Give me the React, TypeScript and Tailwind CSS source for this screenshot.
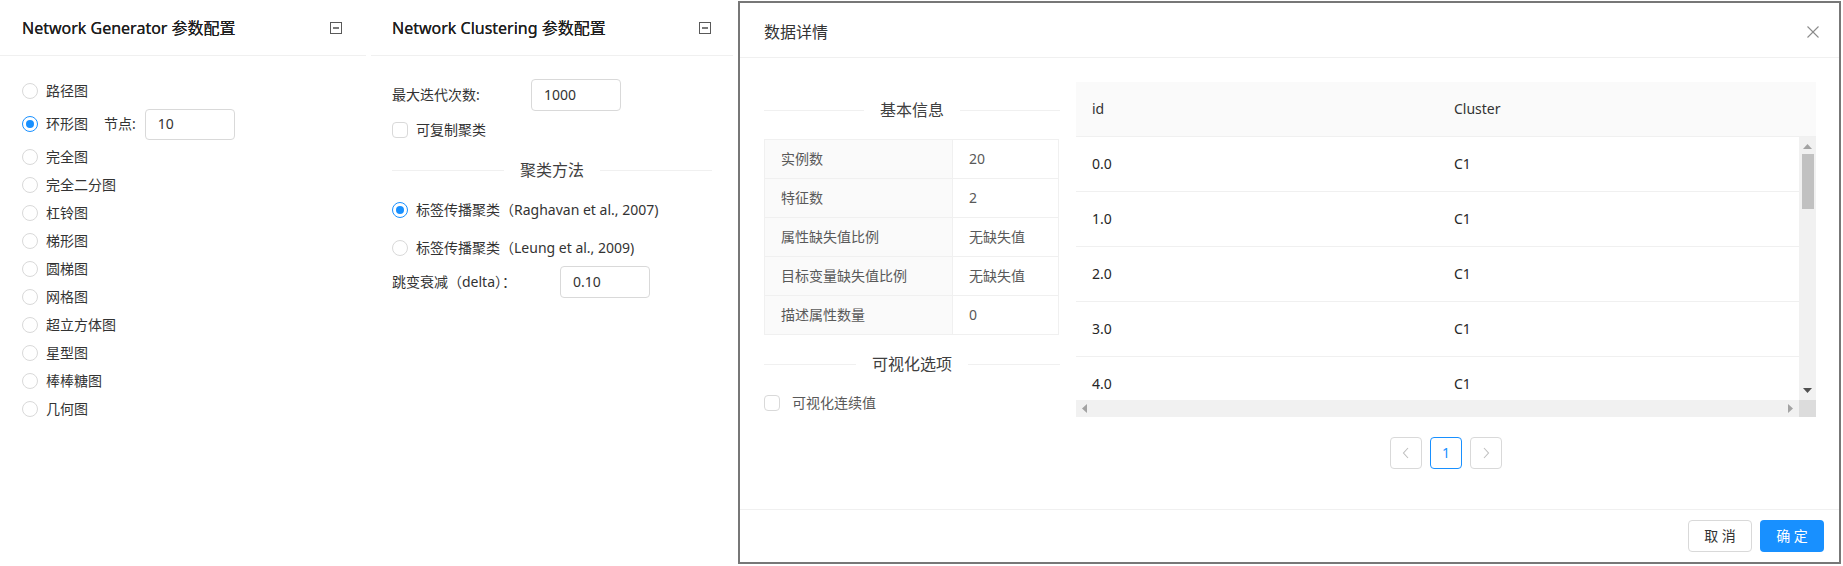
import React from 'react';

const generatorTypes = ['路径图', '环形图', '完全图', '完全二分图', '杠铃图', '梯形图', '圆梯图', '网格图', '超立方体图', '星型图', '棒棒糖图', '几何图'];

const basicInfo = [
    { label: '实例数', value: '20' },
    { label: '特征数', value: '2' },
    { label: '属性缺失值比例', value: '无缺失值' },
    { label: '目标变量缺失值比例', value: '无缺失值' },
    { label: '描述属性数量', value: '0' },
];

const clusterRows = [
    { id: '0.0', cluster: 'C1' },
    { id: '1.0', cluster: 'C1' },
    { id: '2.0', cluster: 'C1' },
    { id: '3.0', cluster: 'C1' },
    { id: '4.0', cluster: 'C1' },
];

function Radio({ checked }: { checked?: boolean }) {
    return (
        <span className={checked
            ? 'w-4 h-4 rounded-full border border-[#1890ff] bg-white flex items-center justify-center shrink-0'
            : 'w-4 h-4 rounded-full border border-[#d9d9d9] bg-white flex items-center justify-center shrink-0'}>
            {checked && <span className="w-2 h-2 rounded-full bg-[#1890ff]" />}
        </span>
    );
}

function Checkbox() {
    return <span className="w-4 h-4 rounded-sm border border-[#d9d9d9] bg-white shrink-0" />;
}

function CollapseIcon() {
    return (
        <svg width="12" height="12" viewBox="0 0 12 12" className="shrink-0">
            <rect x="0.5" y="0.5" width="11" height="11" fill="none" stroke="#595959" />
            <line x1="3" y1="6" x2="9" y2="6" stroke="#595959" strokeWidth="1.6" />
        </svg>
    );
}

function TextDivider({ text, className }: { text: string; className?: string }) {
    return (
        <div className={`flex items-center ${className ?? ''}`}>
            <div className="flex-1 border-t border-[#f0f0f0]" />
            <span className="px-4 text-base leading-[22px] text-[#404040]">{text}</span>
            <div className="flex-1 border-t border-[#f0f0f0]" />
        </div>
    );
}

function PanelHeader({ title, padding }: { title: string; padding: string }) {
    return (
        <div className={`h-14 border-b border-[#f0f0f0] flex items-center justify-between ${padding}`}>
            <span className="text-base text-[#1f1f1f] [text-shadow:0_0_0.3px_#1f1f1f]">{title}</span>
            <CollapseIcon />
        </div>
    );
}

function Chevron({ dir, color = '#bfbfbf' }: { dir: 'left' | 'right'; color?: string }) {
    return (
        <svg width="8" height="12" viewBox="0 0 8 12">
            <polyline
                points={dir === 'left' ? '6,1 1.5,6 6,11' : '2,1 6.5,6 2,11'}
                fill="none"
                stroke={color}
                strokeWidth="1.1"
            />
        </svg>
    );
}

export default function App() {
    return (
        <div className="w-[1843px] h-[566px] bg-white flex overflow-hidden font-['Segoe_UI','Noto_Sans','Noto_Sans_CJK_SC',sans-serif] text-sm text-[#333]">
            {/* Network Generator */}
            <div className="w-[366px] shrink-0">
                <PanelHeader title="Network Generator 参数配置" padding="pl-[22px] pr-6" />
                <div className="pl-[22px] pt-[21px]">
                    {generatorTypes.map((name, i) =>
                        i === 1 ? (
                            <div key={name} className="h-[38px] flex items-center">
                                <Radio checked />
                                <span className="ml-2">{name}</span>
                                <span className="ml-4">节点:</span>
                                <div className="ml-[9px] w-[90px] h-[31px] border border-[#d9d9d9] rounded-sm px-3 flex items-center">10</div>
                            </div>
                        ) : (
                            <div key={name} className="h-7 flex items-center gap-2">
                                <Radio />
                                <span>{name}</span>
                            </div>
                        )
                    )}
                </div>
            </div>

            {/* Network Clustering */}
            <div className="w-[362px] shrink-0 ml-[5px]">
                <PanelHeader title="Network Clustering 参数配置" padding="pl-[21px] pr-[22px]" />
                <div className="pl-[21px] pr-[21px] pt-[23px]">
                    <div className="h-8 flex items-center">
                        <span className="w-[139px]">最大迭代次数:</span>
                        <div className="w-[90px] h-8 border border-[#d9d9d9] rounded-sm px-3 flex items-center">1000</div>
                    </div>
                    <div className="h-7 mt-[5px] flex items-center gap-2">
                        <Checkbox />
                        <span>可复制聚类</span>
                    </div>
                    <TextDivider text="聚类方法" className="mt-[15px]" />
                    <div className="h-7 mt-[15px] flex items-center gap-2">
                        <Radio checked />
                        <span>标签传播聚类（Raghavan et al., 2007)</span>
                    </div>
                    <div className="h-7 mt-[10px] flex items-center gap-2">
                        <Radio />
                        <span>标签传播聚类（Leung et al., 2009)</span>
                    </div>
                    <div className="h-8 mt-[4px] flex items-center">
                        <span className="w-[168px]">跳变衰减（delta）：</span>
                        <div className="w-[90px] h-8 border border-[#d9d9d9] rounded-sm px-3 flex items-center">0.10</div>
                    </div>
                </div>
            </div>

            {/* 数据详情 modal */}
            <div className="w-[1103px] h-[563px] mt-px ml-[5px] shrink-0 border-2 border-[#777] bg-white flex flex-col">
                <div className="h-[55px] border-b border-[#f0f0f0] pl-6 pr-5 pt-[3px] flex items-center justify-between">
                    <span className="text-base text-[#333]">数据详情</span>
                    <svg width="12" height="12" viewBox="0 0 12 12">
                        <line x1="0.5" y1="0.5" x2="11.5" y2="11.5" stroke="#8c8c8c" strokeWidth="1.1" />
                        <line x1="11.5" y1="0.5" x2="0.5" y2="11.5" stroke="#8c8c8c" strokeWidth="1.1" />
                    </svg>
                </div>

                <div className="flex-1 flex pl-6 pt-6">
                    {/* 基本信息 */}
                    <div className="w-[296px] shrink-0">
                        <TextDivider text="基本信息" className="mt-[17px]" />
                        <div className="mt-[18px] w-[295px] border-t border-l border-r border-[#f0f0f0] text-[#595959]">
                            {basicInfo.map((item) => (
                                <div key={item.label} className="h-[39px] flex border-b border-[#f0f0f0]">
                                    <div className="w-[188px] bg-[#fafafa] border-r border-[#f0f0f0] px-4 flex items-center">{item.label}</div>
                                    <div className="flex-1 px-4 flex items-center">{item.value}</div>
                                </div>
                            ))}
                        </div>
                        <TextDivider text="可视化选项" className="mt-[18px]" />
                        <div className="mt-[17px] h-[22px] flex items-center gap-3 text-[#595959]">
                            <Checkbox />
                            <span>可视化连续值</span>
                        </div>
                    </div>

                    {/* Cluster table */}
                    <div className="w-[740px] ml-4 shrink-0">
                        <div className="h-[55px] flex bg-[#fafafa] border-b border-[#f0f0f0] text-[#333]">
                            <div className="w-[362px] px-4 flex items-center">id</div>
                            <div className="flex-1 px-4 flex items-center">Cluster</div>
                        </div>
                        <div className="flex">
                            <div className="flex-1 h-[263px] overflow-hidden text-[#262626]">
                                {clusterRows.map((row) => (
                                    <div key={row.id} className="h-[55px] flex border-b border-[#f0f0f0]">
                                        <div className="w-[362px] px-4 flex items-center">{row.id}</div>
                                        <div className="flex-1 px-4 flex items-center">{row.cluster}</div>
                                    </div>
                                ))}
                            </div>
                            <div className="w-[17px] h-[263px] bg-[#f1f1f1] flex flex-col items-center">
                                <svg width="9" height="5" viewBox="0 0 9 5" className="mt-[7px]">
                                    <polygon points="4.5,0 9,5 0,5" fill="#a3a3a3" />
                                </svg>
                                <div className="w-3 h-[55px] mt-[5px] bg-[#c1c1c1]" />
                                <div className="flex-1" />
                                <svg width="9" height="5" viewBox="0 0 9 5" className="mb-[7px]">
                                    <polygon points="0,0 9,0 4.5,5" fill="#505050" />
                                </svg>
                            </div>
                        </div>
                        <div className="h-[17px] flex">
                            <div className="flex-1 bg-[#f1f1f1] flex items-center justify-between px-[6px]">
                                <svg width="5" height="9" viewBox="0 0 5 9">
                                    <polygon points="5,0 5,9 0,4.5" fill="#a3a3a3" />
                                </svg>
                                <svg width="5" height="9" viewBox="0 0 5 9">
                                    <polygon points="0,0 0,9 5,4.5" fill="#a3a3a3" />
                                </svg>
                            </div>
                            <div className="w-[17px] bg-[#dcdcdc]" />
                        </div>

                        <div className="mt-5 flex justify-center gap-2">
                            <div className="w-8 h-8 border border-[#d9d9d9] rounded-sm flex items-center justify-center">
                                <Chevron dir="left" />
                            </div>
                            <div className="w-8 h-8 border border-[#1890ff] rounded-sm flex items-center justify-center text-[#1890ff]">1</div>
                            <div className="w-8 h-8 border border-[#d9d9d9] rounded-sm flex items-center justify-center">
                                <Chevron dir="right" />
                            </div>
                        </div>
                    </div>
                </div>

                <div className="border-t border-[#f0f0f0] px-[15px] py-[10px] flex justify-end gap-2">
                    <button className="w-16 h-8 border border-[#d9d9d9] rounded-sm bg-white text-[#333]">取 消</button>
                    <button className="w-16 h-8 rounded-sm bg-[#1890ff] text-white">确 定</button>
                </div>
            </div>
        </div>
    );
}
